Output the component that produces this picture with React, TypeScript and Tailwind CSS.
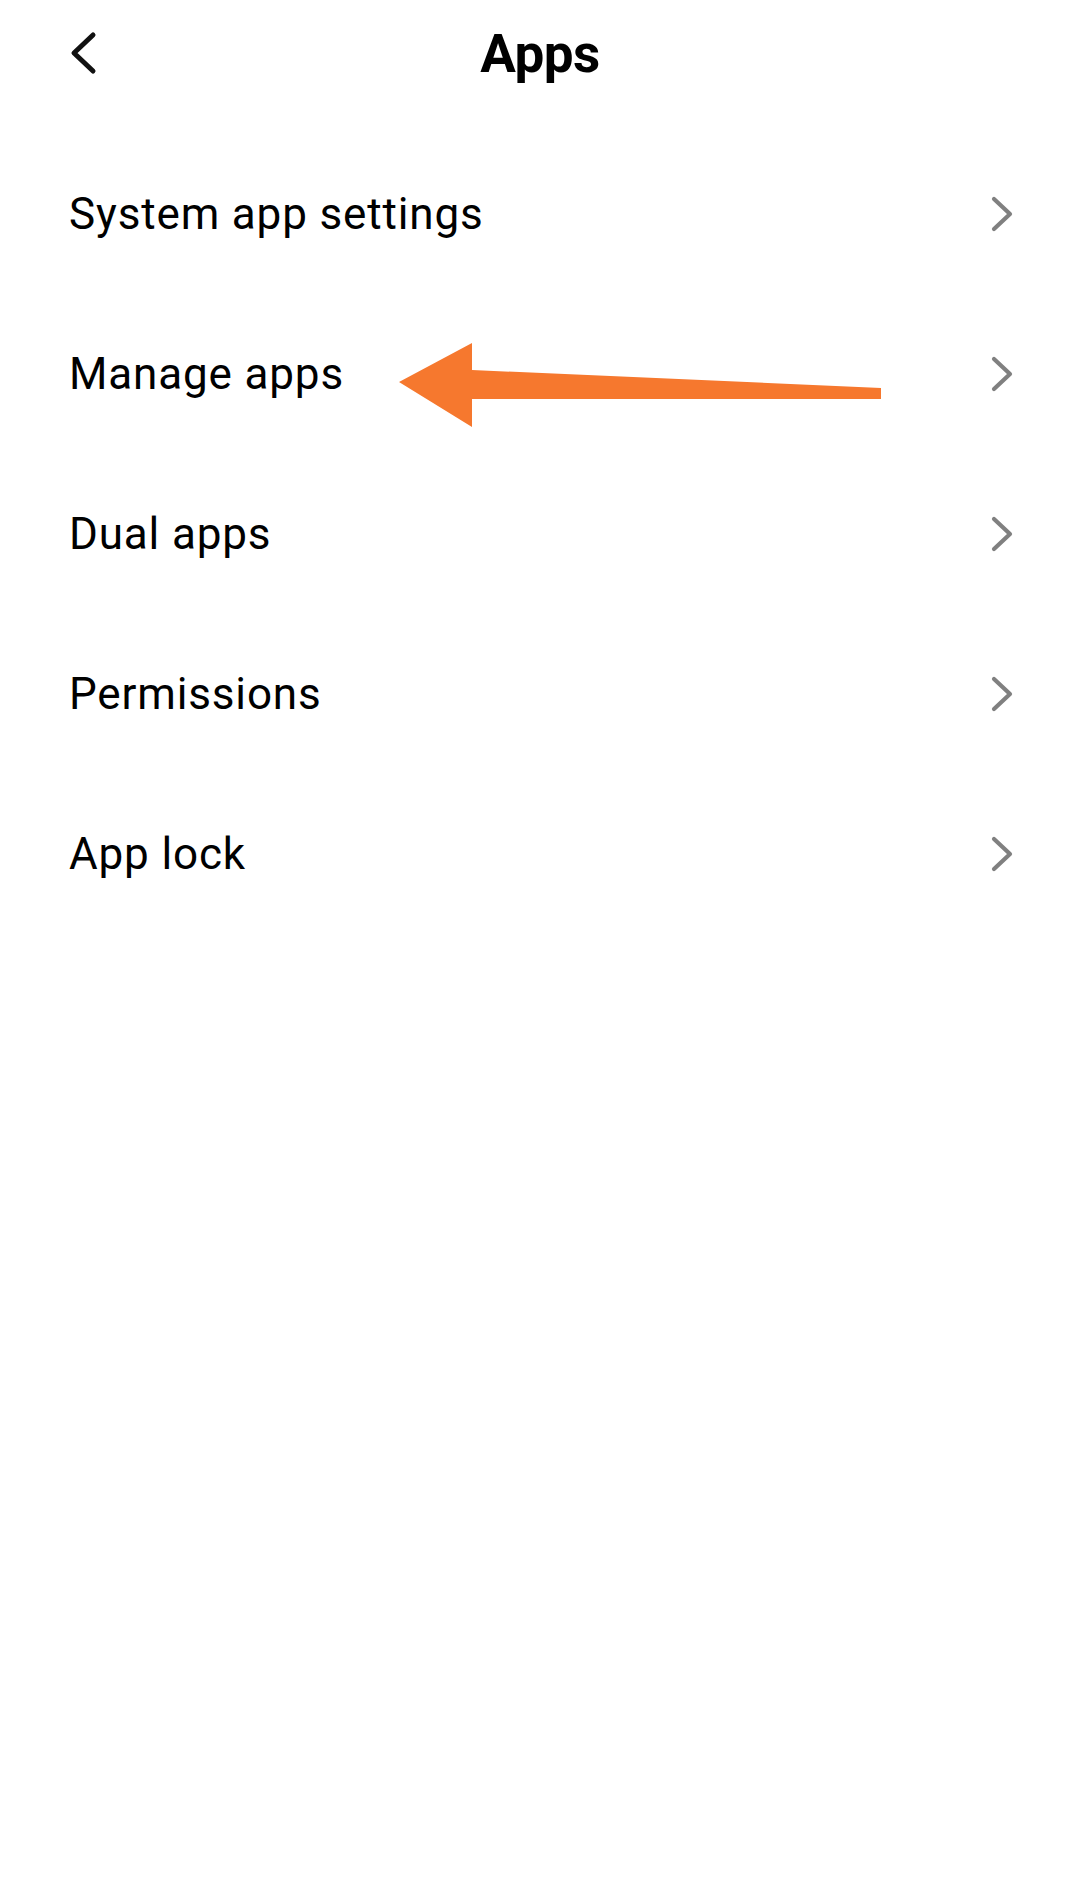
import React from "react";

const items = ["System app settings", "Manage apps", "Dual apps", "Permissions", "App lock"];

function Chevron() {
  return (
    <svg width="24" height="36" viewBox="0 0 24 36" className="shrink-0">
      <path d="M4 3 L20 18 L4 33" fill="none" stroke="#808080" strokeWidth="4.2" strokeLinecap="round" strokeLinejoin="round" />
    </svg>
  );
}

export default function App() {
  return (
    <div className="relative w-[1080px] h-[1888px] bg-white text-black" style={{ fontFamily: "Roboto, 'Noto Sans', sans-serif" }}>
      <header className="relative h-[108px] flex items-center justify-center">
        <svg width="30" height="46" viewBox="0 0 30 46" className="absolute left-[68px] top-[30px]">
          <path d="M25 5 L6 23 L25 41" fill="none" stroke="#111" strokeWidth="5" strokeLinecap="round" strokeLinejoin="round" />
        </svg>
        <h1 className="text-[53px] font-bold leading-none tracking-[-0.5px]">Apps</h1>
      </header>
      <ul className="pt-[26px] pl-[69px] pr-[66px]">
        {items.map((t) => (
          <li key={t} className="h-[160px] flex items-center justify-between">
            <span className="text-[44px] leading-none tracking-[0.85px]">{t}</span>
            <Chevron />
          </li>
        ))}
      </ul>
      <svg className="absolute left-0 top-0 pointer-events-none" width="1080" height="500" viewBox="0 0 1080 500">
        <polygon points="399,382 472,343 472,370 881,388 881,399 472,399 472,427" fill="#F6782E" />
      </svg>
    </div>
  );
}
